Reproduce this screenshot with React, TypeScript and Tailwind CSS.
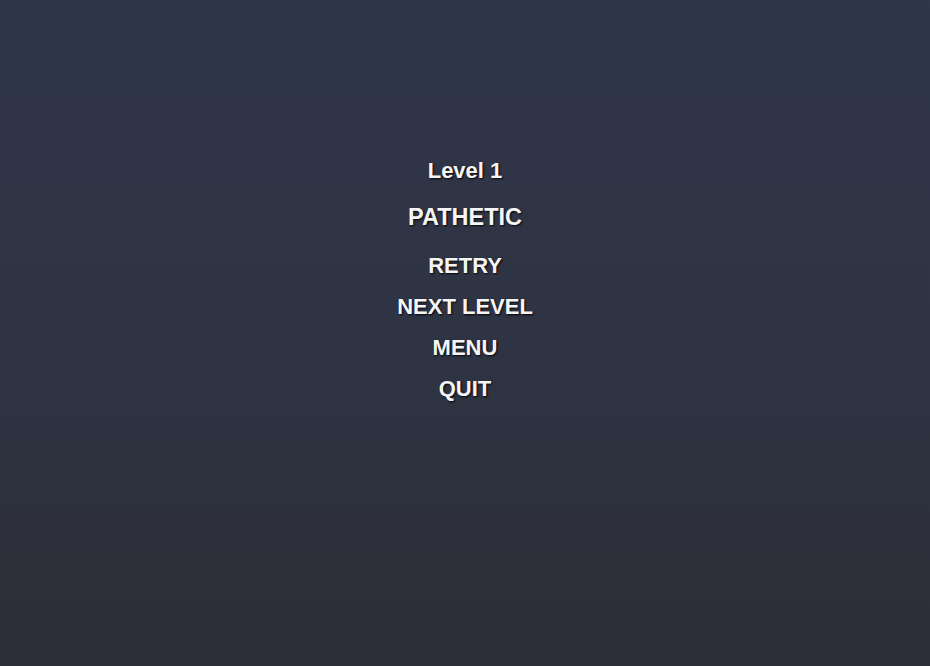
import React from "react";

const menuItems = ["RETRY", "NEXT LEVEL", "MENU", "QUIT"];

const shadow = "[text-shadow:1px_1px_2px_rgba(0,0,0,0.9)]";

const App = () => {
  return (
    <div className="w-full h-[666px] bg-gradient-to-b from-[#2f3648] via-[#2f3444] to-[#2c2e37] font-['Liberation_Sans',Arial,sans-serif] text-[#f5f5f5] font-bold text-[22px] leading-[25px] text-center">
      <div className="flex flex-col items-center pt-[158px]">
        <p className={shadow}>Level 1</p>
        <p className={`mt-[22px] text-[23.5px] ${shadow}`}>PATHETIC</p>
        <ul className="mt-[23px] flex flex-col items-center gap-4">
          {menuItems.map((item) => (
            <li key={item} className={`cursor-pointer ${shadow}`}>
              {item}
            </li>
          ))}
        </ul>
      </div>
    </div>
  );
};

export default App;
